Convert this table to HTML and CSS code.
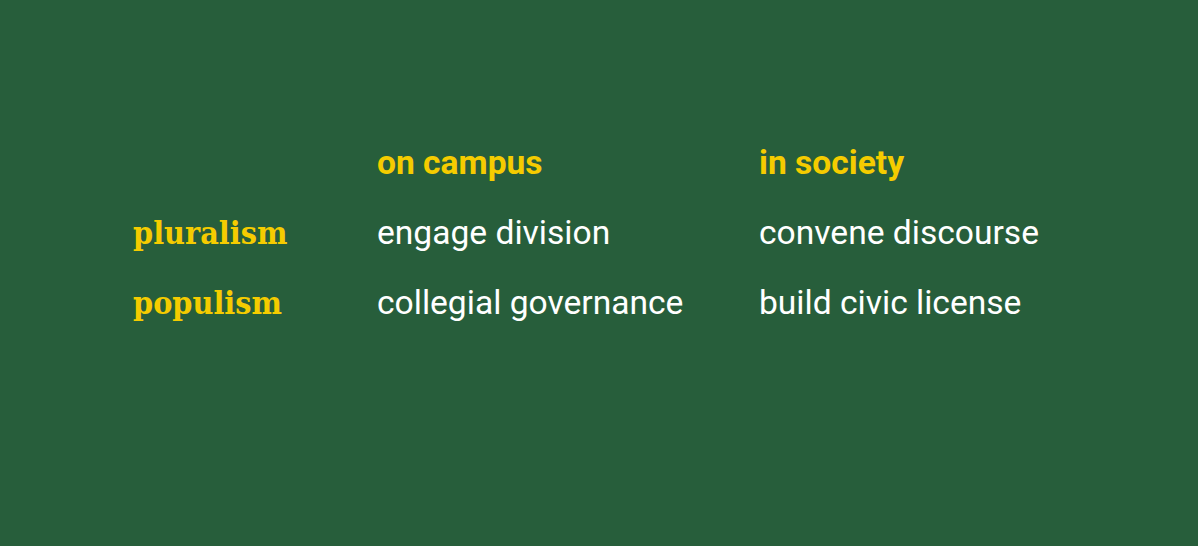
FILE: index.html
```html
<!DOCTYPE html>
<html>
<head>
<meta charset="utf-8">
<link rel="stylesheet" href="styles.css">
</head>
<body>
<div class="table">
  <div class="cell"></div>
  <div class="cell head">on campus</div>
  <div class="cell head">in society</div>
  <div class="cell label">pluralism</div>
  <div class="cell">engage division</div>
  <div class="cell">convene discourse</div>
  <div class="cell label">populism</div>
  <div class="cell">collegial governance</div>
  <div class="cell">build civic license</div>
</div>
</body>
</html>
```
FILE: styles.css
```css
html, body {
  margin: 0;
  height: 100%;
}
body {
  background: #275e3b;
  font-family: Roboto, "Liberation Sans", sans-serif;
  color: #ffffff;
  overflow: hidden;
}
.table {
  display: grid;
  grid-template-columns: 243px 382px auto;
  padding: 128px 0 0 134px;
}
.cell {
  font-size: 33.6px;
  line-height: 70px;
  height: 70px;
  white-space: nowrap;
}
.head {
  color: #f5cc00;
  font-weight: 700;
}
.label {
  color: #f5cc00;
  font-family: "DejaVu Serif Condensed", "DejaVu Serif", serif;
  font-stretch: condensed;
  font-weight: 700;
  font-size: 32px;
  margin-left: -1px;
}
```
